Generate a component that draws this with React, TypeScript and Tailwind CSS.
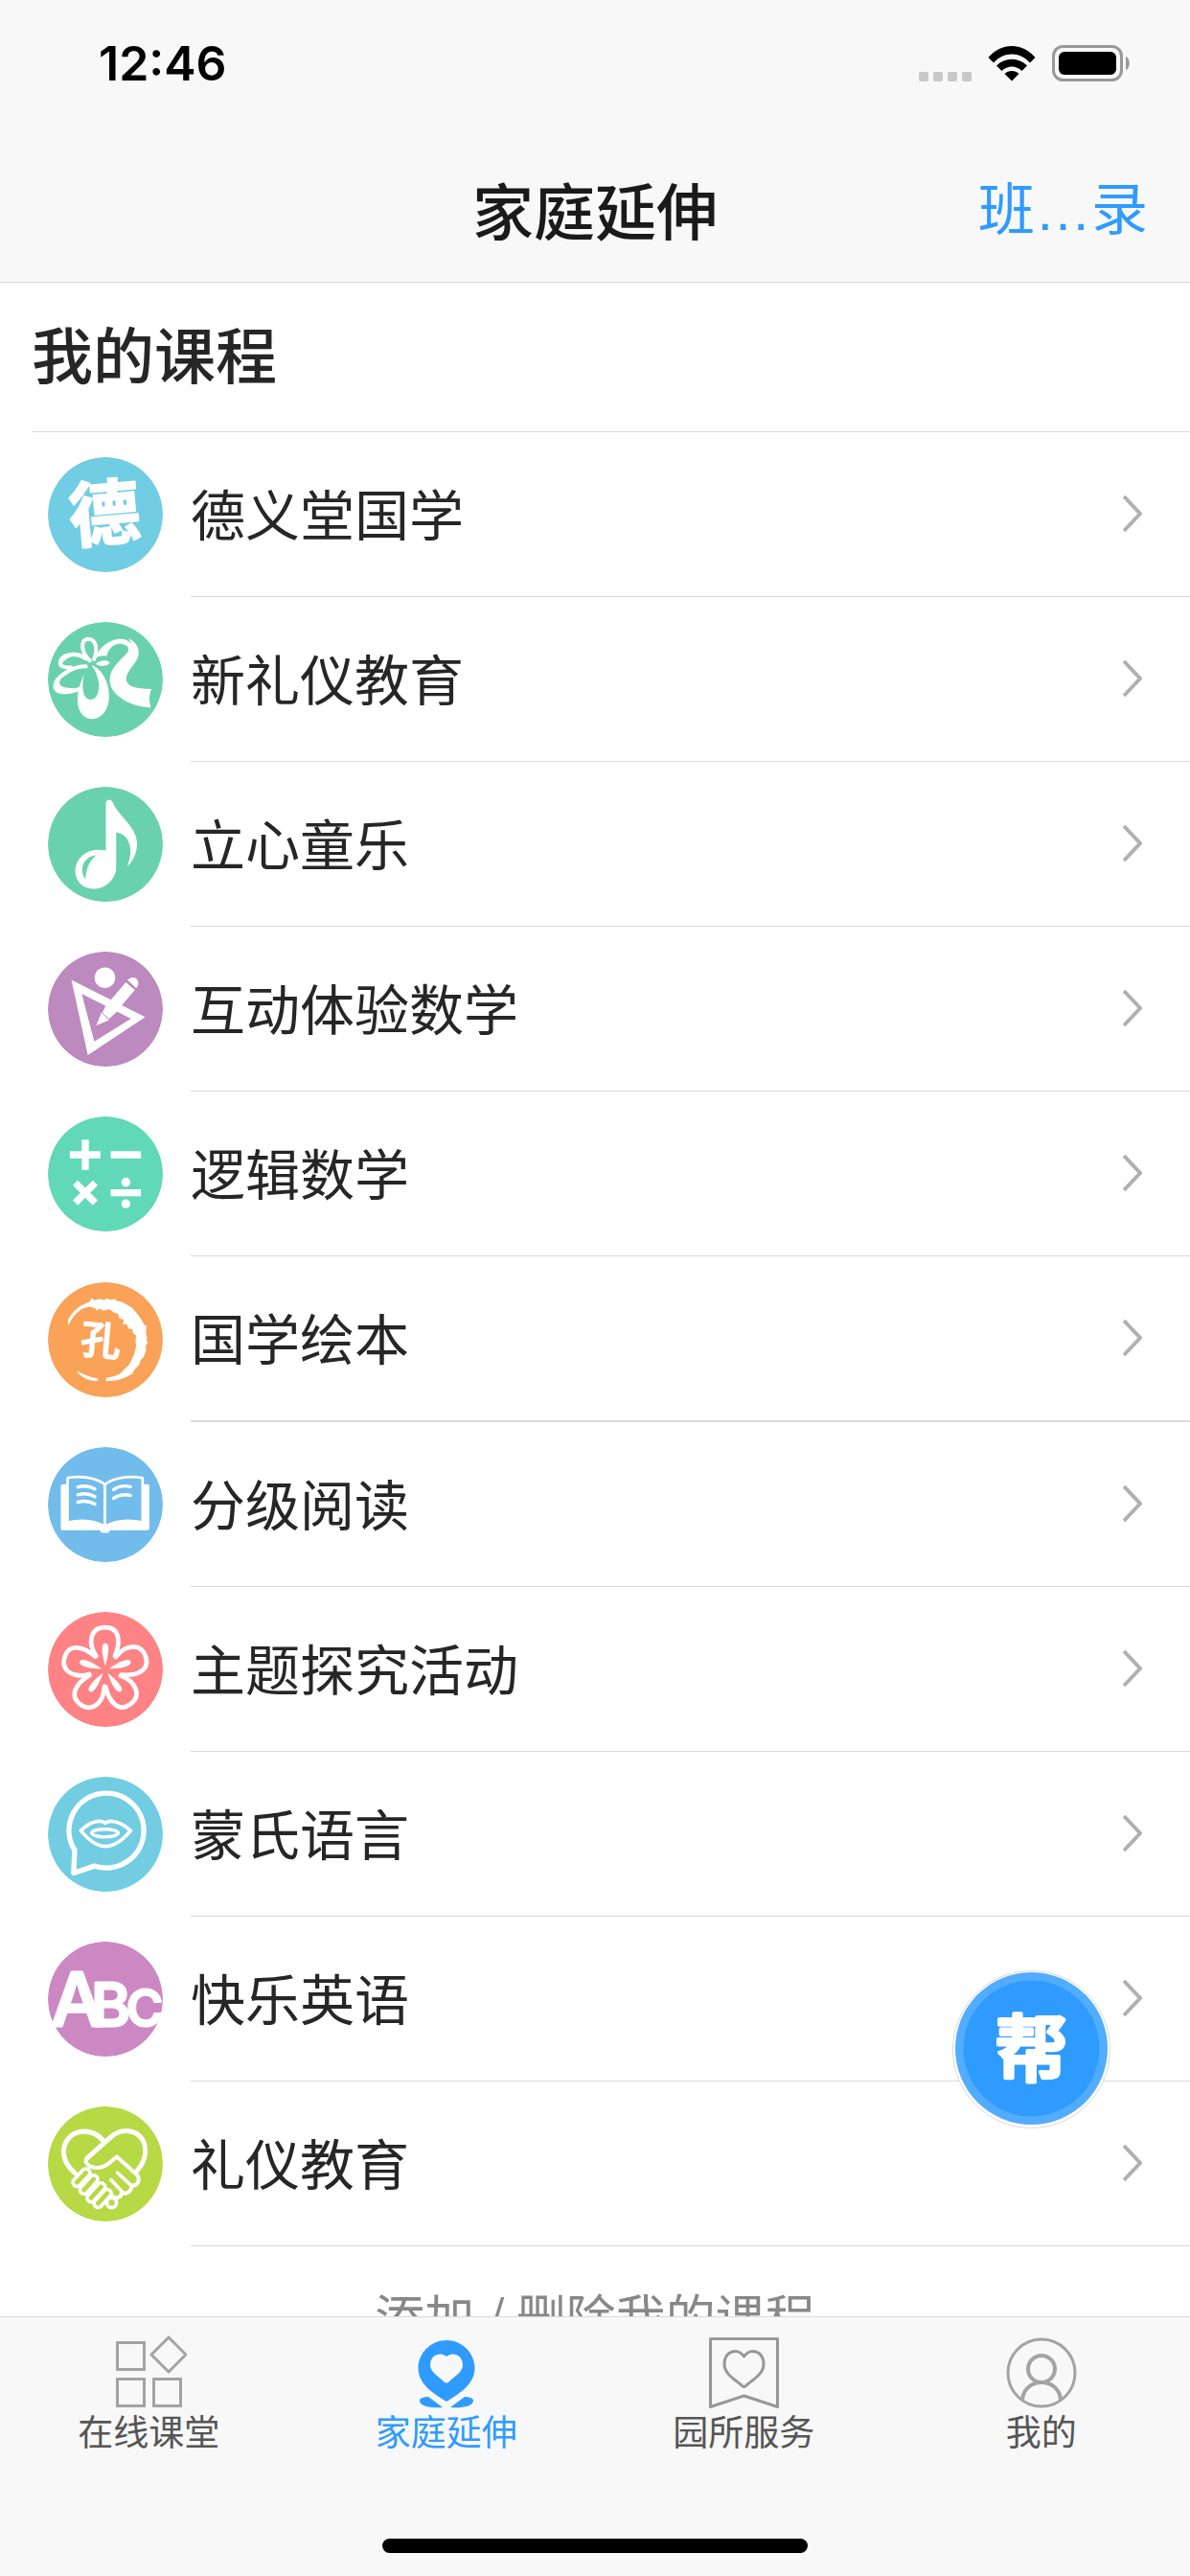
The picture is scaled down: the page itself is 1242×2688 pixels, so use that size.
import { useState } from "react"
import type { ReactNode } from "react"

type Course = {
  name: string
  color: string
  icon: ReactNode
  divider?: string
}

const cjk = '"Noto Sans CJK SC", sans-serif'

const petals = [0, 72, 144, 216, 288]

const courses: Course[] = [
  {
    name: "德义堂国学",
    color: "#71cde3",
    icon: (
      <text x="176" y="255" textAnchor="middle" fontFamily={cjk} fontSize="220" fontWeight="700" fill="#fff" stroke="#fff" strokeWidth="6" strokeLinejoin="round" transform="rotate(-5 178 178)">德</text>
    ),
  },
  {
    name: "新礼仪教育",
    color: "#6ad1ae",
    icon: (
      <>
        <g fill="none" stroke="#fff" strokeWidth="12" strokeLinecap="round">
          <path d="M130 120C104 96 98 54 125 53C152 54 154 88 143 116" />
          <path d="M118 114C92 94 50 98 40 118C32 138 50 143 72 141" />
          <path d="M118 138C80 136 24 170 22 198C22 224 62 222 98 208" />
        </g>
        <path fill="#fff" d="M100 103C78 94 48 100 38 118L42 134C52 110 80 106 100 103ZM72 141C48 152 18 176 20 202C30 220 64 218 98 206C60 206 36 204 36 188C38 168 56 152 72 141Z" />
        <path fill="#fff" fillRule="evenodd" d="M135 133C175 150 190 195 190 230C190 275 165 301 138 301C105 301 92 270 92 240C92 215 100 190 114 158C104 190 105 240 132 241C154 241 160 215 158 190C155 165 145 148 135 133Z" />
        <path fill="#fff" d="M148 131C160 119 182 116 192 126C186 138 166 140 148 131Z" />
        <path fill="#fff" d="M147 113C158 75 200 50 230 53C243 54 253 60 260 68L251 52C270 60 282 75 282 97C282 125 248 145 243 175C243 200 270 208 322 208C312 225 315 250 320 266C250 262 192 225 192 180C192 145 220 125 243 100C262 80 240 69 225 68C205 68 190 80 182 106C170 103 158 106 147 113Z" />
      </>
    ),
  },
  {
    name: "立心童乐",
    color: "#6ad1ae",
    icon: (
      <>
        <path fill="#fff" d="M180 50Q182 40 192 40Q200 42 204 54C225 95 275 125 277 175C278 205 262 235 246 247C264 205 262 150 212 141L212 250C212 285 180 317 142 317C108 317 85 293 85 262C85 220 125 185 180 198Z" />
        <path fill="#6ad1ae" d="M150 213C115 214 92 255 117 287C118 255 130 228 150 213Z" />
      </>
    ),
  },
  {
    name: "互动体验数学",
    color: "#bc8abf",
    icon: (
      <>
        <circle cx="177" cy="81" r="32" fill="#fff" />
        <path fill="#fff" fillRule="evenodd" d="M73 88L302 203L124 321ZM105 131L144 279L258 208Z" />
        <path fill="#fff" d="M242 95L270 119L230 166L214 187L190 209L169 190L178 170L200 144Z" />
        <path fill="#fff" d="M166 190L190 213L150 229Z" />
        <path fill="#fff" d="M247 88C258 76 276 78 280 92C282 102 279 109 274 113Z" />
      </>
    ),
  },
  {
    name: "逻辑数学",
    color: "#61d8b8",
    icon: (
      <>
        <g stroke="#fff" strokeWidth="22">
          <path d="M116 72V166M68 119H163M195 119H289M195 237H289" />
          <path d="M85 206L147 268M147 206L85 268" />
        </g>
        <circle cx="242" cy="204" r="14" fill="#fff" />
        <circle cx="242" cy="271" r="14" fill="#fff" />
      </>
    ),
  },
  {
    name: "国学绘本",
    color: "#faa258",
    divider: "border-b-2",
    icon: (
      <>
        <path fill="#fff" d="M64 134L62 118C72 98 84 84 104 72L130 60L136 48L144 56L160 52L174 55L184 50L192 55L208 52L214 58L228 60L246 70L262 80L278 98L292 118L300 134L306 132L304 160L308 170L306 182L311 187L304 196L304 214L296 234L288 240L284 256L268 272L262 284L240 296L216 304L180 307L181 297L204 292L224 284L240 268L252 256L262 236L268 222L274 198L272 182L274 166L264 158L262 146L250 144L246 132L232 130L236 116L222 112L218 98L204 94L192 84L172 88L160 82L152 88L146 80L128 76L108 82C90 92 76 108 64 134Z" />
        <path fill="#fff" d="M88 275C110 285 130 295 155 299L155 306C130 308 105 297 88 275Z" />
        <text x="165" y="226" textAnchor="middle" fontFamily={cjk} fontSize="124" fontWeight="500" fill="#fff" stroke="#fff" strokeWidth="4" strokeLinejoin="round" transform="rotate(5 165 181)">孔</text>
      </>
    ),
  },
  {
    name: "分级阅读",
    color: "#72bcec",
    icon: (
      <>
        <path fill="#fff" d="M46 115H309Q315 115 315 121V252Q315 258 309 258H193Q190 266 184 266H170Q164 266 161 258H46Q40 258 40 252V121Q40 115 46 115Z" />
        <g fill="#72bcec" stroke="#fff" strokeWidth="8" strokeLinejoin="round">
          <path d="M61 96C100 88 148 94 177 116V246C145 228 105 224 61 234Z" />
          <path d="M177 116C206 94 254 88 294 96V234C250 224 210 228 177 246Z" />
        </g>
        <path d="M61 234C105 224 145 228 177 246C210 228 250 224 294 234V248H61Z" fill="#fff" />
        <g fill="none" stroke="#fff" strokeWidth="10" strokeLinecap="round">
          <path d="M93 124Q122 116 146 130M93 148Q122 140 146 154M93 171Q122 163 146 177" />
          <path d="M204 132Q228 116 256 123M204 159Q228 143 256 150" />
        </g>
      </>
    ),
  },
  {
    name: "主题探究活动",
    color: "#ff8284",
    icon: petals.map((angle) => (
      <g key={angle} transform={`rotate(${angle} 178 180)`}>
        <path d="M150 137C122 95 132 48 178 48C224 48 226 95 208 137" fill="none" stroke="#fff" strokeWidth="14" strokeLinecap="round" />
        <path d="M178 168C166 130 164 98 178 97C192 98 190 130 178 168Z" fill="#fff" />
      </g>
    )),
  },
  {
    name: "蒙氏语言",
    color: "#72cde2",
    icon: (
      <g fill="none" stroke="#fff" strokeLinejoin="round">
        <path strokeWidth="16" d="M145 277L80 299L83 228A116 116 0 1 1 145 277Z" />
        <path strokeWidth="11" d="M102 167C125 145 145 138 160 138Q172 138 178 144Q185 138 196 138C215 138 235 148 257 167C230 200 205 216 178 216C150 216 125 195 102 167Z" />
        <ellipse strokeWidth="10" cx="177" cy="175" rx="41" ry="12" />
      </g>
    ),
  },
  {
    name: "快乐英语",
    color: "#cc88c3",
    icon: (
      <text y="262" fill="#fff" stroke="#fff" strokeWidth="9" strokeLinejoin="round" fontFamily="Inter, sans-serif" fontWeight="500">
        <tspan x="9" fontSize="230">A</tspan>
        <tspan x="134" fontSize="186">B</tspan>
        <tspan x="244" fontSize="154">C</tspan>
      </text>
    ),
  },
  {
    name: "礼仪教育",
    color: "#b6d945",
    icon: (
      <g fill="none" stroke="#fff" strokeLinecap="round" strokeLinejoin="round">
        <path strokeWidth="15" d="M170 104C140 70 90 70 65 98C38 130 45 175 85 208" />
        <path strokeWidth="15" d="M122 160L190 100C225 65 275 70 295 105C313 145 295 180 275 202" />
        <path strokeWidth="12" d="M122 160C104 182 152 206 190 176L214 156L277 213C290 232 274 250 259 244C262 262 244 276 230 266C228 282 212 290 200 278" />
        <path strokeWidth="11" d="M216 206L259 246M196 228L232 266" />
        <circle strokeWidth="11" cx="198" cy="299" r="15" />
        <path strokeWidth="36" d="M118 206L90 236M142 226L112 259M165 250L134 284M184 270L156 301" />
        <path stroke="#b6d945" strokeWidth="14" d="M118 206L90 236M142 226L112 259M165 250L134 284M184 270L156 301" />
      </g>
    ),
  },
]

const tabs = [
  {
    name: "在线课堂",
    icon: (
      <g fill="none" stroke="#a3a3a3" strokeWidth="3">
        <path d="M7.500 9.500H35.500V37.500H7.500ZM7.500 47.500H35.500V75.500H7.500ZM45.500 47.500H73.500V75.500H45.500Z" />
        <path d="M61 4L79 22L61 40L43 22Z" />
      </g>
    ),
  },
  {
    name: "家庭延伸",
    icon: (
      <g fill="currentColor">
        <path fillRule="evenodd" d="M40 7C56 7 69.500 20 69.500 36C69.500 52 55 62 40 71C25 62 10.500 52 10.500 36C10.500 20 24 7 40 7ZM40 24C35 19 23 21 23 33C23 40 32 45 37 50Q40 53 43 50C48 45 57 40 57 33C57 21 45 19 40 24Z" />
        <path d="M21 66L36 77C24 78 12 76 12 70C12 67 17 66 21 66ZM59 66L44 77C56 78 68 76 68 70C68 67 63 66 59 66Z" />
      </g>
    ),
  },
  {
    name: "园所服务",
    icon: (
      <g fill="none" stroke="#979797" strokeWidth="3" strokeLinejoin="round">
        <path d="M5.500 5.500H75.500V76.500L40.500 65L5.500 76.500Z" />
        <path d="M40.500 24C35 15 20 17 20 32C20 42 31 48 38 54Q40.500 57 43 54C50 48 61 42 61 32C61 17 46 15 40.500 24Z" />
      </g>
    ),
  },
  {
    name: "我的",
    icon: (
      <g fill="none" stroke="#a3a3a3">
        <circle cx="40" cy="41" r="35" strokeWidth="3" />
        <circle cx="40" cy="37" r="14" strokeWidth="4" />
        <path d="M20 70C20 59 29 51 40 51C51 51 60 59 60 70" strokeWidth="4" />
      </g>
    ),
  },
]

function StatusBar() {
  return (
    <div className="flex h-[140px] items-center justify-between pr-[62px] pb-2 pl-[103px]">
      <span className="font-[Inter] text-[50px] leading-[60px] font-semibold text-black">12:46</span>
      <div className="flex items-center gap-4">
        <div className="flex gap-[5px] pt-7">
          <i className="size-2.5 rounded-xs bg-[#c8c8c8]" />
          <i className="size-2.5 rounded-xs bg-[#c8c8c8]" />
          <i className="size-2.5 rounded-xs bg-[#c8c8c8]" />
          <i className="size-2.5 rounded-xs bg-[#c8c8c8]" />
        </div>
        <svg width="52" height="38" viewBox="0 0 52 38">
          <path d="M1.500 13C15 -3 37 -3 50.500 13L45 18.500C34 6.500 18 6.500 7 18.500Z" />
          <path d="M10 21.500C19 12.500 33 12.500 42 21.500L36.500 27C30.500 21 21.500 21 15.500 27Z" />
          <path d="M18.500 30C22.500 26 29.500 26 33.500 30L26 37.500Z" />
        </svg>
        <svg width="82" height="38" viewBox="0 0 82 38">
          <rect x="1.500" y="1.500" width="71" height="35" rx="10" fill="none" stroke="#999" strokeWidth="3" />
          <rect x="7" y="7" width="60" height="24" rx="6" />
          <path d="M77 12C82 14 82 24 77 26Z" fill="#999" />
        </svg>
      </div>
    </div>
  )
}

export default function App() {
  const [activeTab, setActiveTab] = useState("家庭延伸")

  return (
    <div className="relative flex h-screen flex-col bg-white font-['Noto_Sans_CJK_SC',sans-serif] text-[#262626]">
      <header className="shrink-0 border-b border-[#d9d9d9] bg-[#f8f8f8]">
        <StatusBar />
        <div className="grid h-[154px] grid-cols-[1fr_auto_1fr] items-center px-11">
          <h1 className="col-start-2 text-[64px] leading-[76px] font-medium text-[#1a1a1a]">家庭延伸</h1>
          <button className="justify-self-end text-[59px] leading-[76px] text-[#2f9bff]">
            班<span className="font-['Liberation_Sans',sans-serif]">…</span>录
          </button>
        </div>
      </header>

      <main className="min-h-0 flex-1 overflow-y-auto [scrollbar-width:none]">
        <h2 className="ml-[33px] flex h-[156px] items-center border-b border-[#d9d9d9] pb-3 text-[64px] leading-[76px] font-medium">我的课程</h2>
        <ul>
          {courses.map((course) => (
            <li key={course.name}>
              <button className="flex w-full items-center pl-[50px] text-left">
                <svg className="size-[120px] shrink-0 rounded-full" viewBox="0 0 357 357">
                  <circle cx="178.500" cy="178.500" r="178.500" fill={course.color} />
                  {course.icon}
                </svg>
                <span className={`ml-[29px] flex flex-1 items-center justify-between border-[#d9d9d9] pr-[50px] ${course.divider ?? "border-b"}`}>
                  <span className="pt-[43px] pb-12 text-[57px] leading-[80px]">{course.name}</span>
                  <svg width="20" height="39" viewBox="0 0 20 39" fill="none" stroke="#b0b0b0" strokeWidth="4">
                    <path d="M1 1L18 19L1 37" />
                  </svg>
                </span>
              </button>
            </li>
          ))}
        </ul>
        <button className="block w-full pt-[34px] pb-10 text-center text-[52px] leading-[76px] text-[#888]">添加 / 删除我的课程</button>
      </main>

      <nav className="shrink-0 border-t border-[#d9d9d9] bg-[#f8f8f8]">
        <div className="grid grid-cols-4">
          {tabs.map((tab) => (
            <button
              key={tab.name}
              onClick={() => setActiveTab(tab.name)}
              className={`flex flex-col items-center pt-[17px] ${activeTab === tab.name ? "text-[#2f9bff]" : "text-[#555]"}`}
            >
              <svg width="80" height="80" viewBox="0 0 80 80">{tab.icon}</svg>
              <span className="text-[37px] leading-[42px]">{tab.name}</span>
            </button>
          ))}
        </div>
        <div className="mx-auto mt-[92px] mb-6 h-[15px] w-[444px] rounded-full bg-black" />
      </nav>

      {/* floating help button */}
      <button className="absolute right-[83px] bottom-[467px]">
        <svg width="165" height="165" viewBox="0 0 165 165">
          <circle cx="82.500" cy="82.500" r="82" fill="#fff" stroke="#d9d9d9" />
          <circle cx="82.500" cy="81.500" r="79.500" fill="#52acff" />
          <circle cx="82.500" cy="81.500" r="71" fill="#2f9bff" />
          <text x="82.500" y="110" textAnchor="middle" fontFamily={cjk} fontSize="76" fontWeight="500" fill="#fff" stroke="#fff" strokeWidth="4" strokeLinejoin="round">帮</text>
        </svg>
      </button>
    </div>
  )
}
